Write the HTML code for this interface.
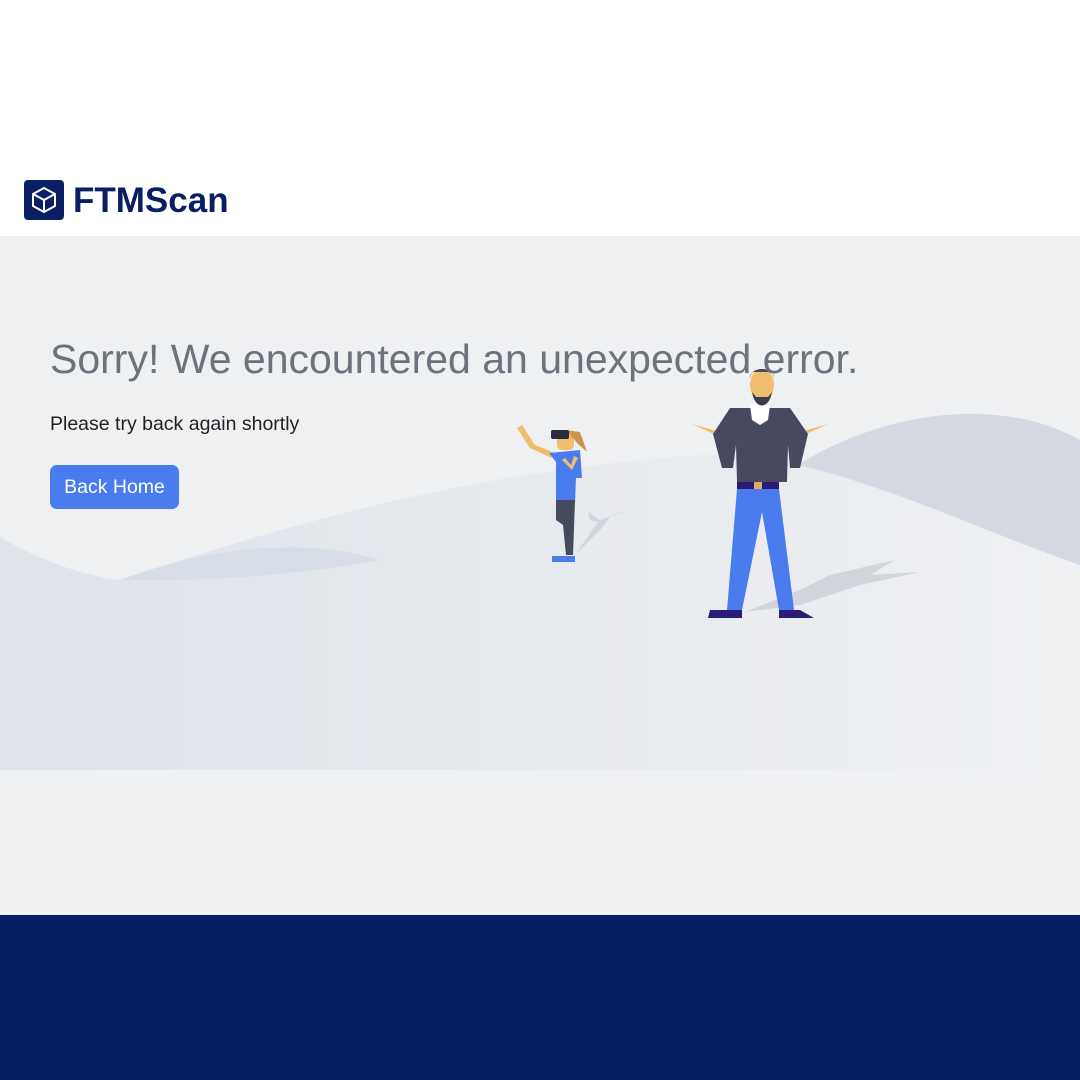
<!DOCTYPE html>
<html><head><meta charset="utf-8"><style>
body{margin:0;width:1080px;height:1080px;overflow:hidden;background:#fff;font-family:"Liberation Sans",sans-serif;position:relative}
.logo{position:absolute;left:24px;top:180px;width:40px;height:40px;background:#0a1f63;border-radius:4px}
.brand{position:absolute;left:73px;top:181px;font-size:35px;font-weight:bold;color:#0a1f63;letter-spacing:0px}
.main{position:absolute;left:0;top:236px;width:1080px;height:534px;background:#eff0f2;overflow:hidden}
.lower{position:absolute;left:0;top:770px;width:1080px;height:145px;background:#eff0f2}
.foot{position:absolute;left:0;top:915px;width:1080px;height:165px;background:#081e64}
h1{position:absolute;left:50px;top:336px;margin:0;font-size:41px;font-weight:normal;color:#6c737d;z-index:1;white-space:nowrap}
p{position:absolute;left:50px;top:414px;margin:0;font-size:19.5px;color:#1e2022;z-index:1;white-space:nowrap}
.btn{position:absolute;left:50px;top:465px;width:129px;height:44px;background:#4a7cf0;border-radius:7px;color:#fff;font-size:19.5px;line-height:44px;text-align:center;z-index:1}
svg{position:absolute;left:0;top:0}
</style></head><body>
<div class="logo"><svg width="40" height="40" viewBox="0 0 40 40"><g fill="none" stroke="#fff" stroke-width="2" stroke-linejoin="round"><path d="M20 8 L31 14 L31 26 L20 32 L9 26 L9 14 Z M9 14 L20 20 L31 14 M20 20 L20 32"/></g></svg></div>
<div class="brand">FTMScan</div>
<div class="main">
<svg width="1080" height="534" viewBox="0 236 1080 534">
<defs><linearGradient id="g" x1="0" x2="1"><stop offset="0" stop-color="#dfe3ea"/><stop offset="1" stop-color="#eef0f2"/></linearGradient></defs>
<path d="M790 470 C880 410 1000 395 1080 440 L1080 565 C990 565 900 520 790 470 Z" fill="#d5dae2"/>
<path d="M0 537 C40 560 80 575 120 580 C300 520 480 470 700 455 C820 450 950 520 1080 565 L1080 770 L0 770 Z" fill="url(#g)"/>
<path d="M120 580 C200 550 300 535 380 560 C300 575 200 582 120 580 Z" fill="#d8dee7"/>
<path d="M575 555 L600 530 L612 515 L630 510 L600 520 L588 512 L590 520 L598 522 Z" fill="#d2d5dc"/>
<path d="M745 612 L800 590 L830 575 L895 560 L870 575 L920 572 L860 585 L800 605 Z" fill="#d2d5dc"/>
<path d="M517 428 L530 448 L552 458 L553 452 L535 445 L522 425 Z" fill="#f0be6a"/>
<path d="M549 453 L580 450 L582 478 L576 478 L575 502 L556 502 L556 462 Z" fill="#4a7cf0"/>
<path d="M556 500 L575 500 L573 555 L566 555 L563 525 L556 520 Z" fill="#454a5c"/>
<path d="M552 556 L575 556 L575 562 L552 562 Z" fill="#4a7cf0"/>
<rect x="557" y="432" width="17" height="18" rx="5" fill="#f0be6a"/>
<path d="M566 430 L580 432 L587 452 L578 444 Z" fill="#c9974c"/>
<rect x="551" y="430" width="18" height="9" rx="2" fill="#2a2d3c"/>
<path d="M562 460 L572 470 L578 458 L574 456 L571 465 L565 458 Z" fill="#f0be6a"/>
<path d="M692 424 L718 436 L728 420 L720 432 Z" fill="#f0be6a"/>
<path d="M828 424 L802 436 L792 420 L800 432 Z" fill="#f0be6a"/>
<path d="M730 408 L790 408 L808 434 L800 468 L790 468 L788 445 L787 482 L737 482 L736 445 L733 468 L722 468 L713 434 Z" fill="#474a5f"/>
<path d="M750 405 L770 405 L768 420 L760 425 L752 420 Z" fill="#fff"/>
<ellipse cx="762" cy="385" rx="12" ry="16" fill="#f0be6a"/>
<path d="M750 378 C750 366 774 366 774 378 L772 372 L752 372 Z" fill="#474a5f"/>
<path d="M752 392 C755 410 769 410 772 392 L768 397 L756 397 Z" fill="#3a3d4f"/>
<rect x="737" y="482" width="42" height="7" fill="#2b1c7a"/>
<rect x="754" y="482" width="8" height="7" fill="#e0a968"/>
<path d="M737 489 L779 489 L794 610 L779 610 L762 512 L742 610 L727 610 Z" fill="#4a7cf0"/>
<path d="M710 610 L742 610 L742 618 L708 618 Z M779 610 L800 610 L814 618 L779 618 Z" fill="#2b1c7a"/>
</svg>
<h1 style="top:100px">Sorry! We encountered an unexpected error.</h1>
<p style="top:177px">Please try back again shortly</p>
<div class="btn" style="top:229px">Back Home</div>
</div>
<div class="lower"></div>
<div class="foot"></div>
</body></html>
